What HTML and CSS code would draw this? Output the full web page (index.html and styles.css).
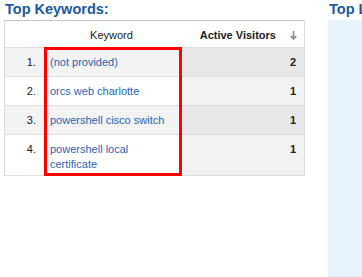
FILE: index.html
```html
<!DOCTYPE html>
<html lang="en">
<head>
  <meta charset="UTF-8" />
  <title>Real-Time Overview</title>
  <link rel="stylesheet" href="styles.css">
</head>
<body>
  <div class="dashboard">
    <!-- keywords widget -->
    <section class="widget keywords">
      <h2 class="widget-title">Top Keywords:</h2>
      <div class="table-wrap">
        <table class="report">
          <colgroup>
            <col class="col-num">
            <col class="col-key">
            <col class="col-val">
          </colgroup>
          <thead>
            <tr>
              <th></th>
              <th class="center">Keyword</th>
              <th class="val">Active Visitors
                <svg class="sort-arrow" width="7" height="9" viewBox="0 0 7 9">
                  <path d="M3.5 0 V8 M0.7 5 L3.5 8 L6.3 5" fill="none" stroke="#8a8a8a" stroke-width="1.6"/>
                </svg>
              </th>
            </tr>
          </thead>
          <tbody>
            <tr class="odd">
              <td class="num">1.</td>
              <td class="key"><a href="#">(not provided)</a></td>
              <td class="val">2</td>
            </tr>
            <tr>
              <td class="num">2.</td>
              <td class="key"><a href="#">orcs web charlotte</a></td>
              <td class="val">1</td>
            </tr>
            <tr class="odd">
              <td class="num">3.</td>
              <td class="key"><a href="#">powershell cisco switch</a></td>
              <td class="val">1</td>
            </tr>
            <tr>
              <td class="num">4.</td>
              <td class="key"><a href="#">powershell local certificate</a></td>
              <td class="val">1</td>
            </tr>
          </tbody>
        </table>
        <div class="highlight"></div>
      </div>
    </section>

    <!-- next widget, cut off at the window edge -->
    <section class="widget pages">
      <h2 class="widget-title">Top Locations:</h2>
      <div class="panel"></div>
    </section>
  </div>
</body>
</html>
```

FILE: styles.css
```css
body {
  margin: 0;
  font-family: "Liberation Sans", Arial, sans-serif;
  font-size: 11px;
  color: #222;
  background: #fff;
  overflow: hidden;
}

.dashboard {
  display: flex;
  padding-left: 4px;
  height: 277px;
}

.widget-title {
  margin: 0;
  height: 20px;
  padding-left: 1px;
  font-size: 14.5px;
  line-height: 18px;
  font-weight: bold;
  color: #1a58a0;
  white-space: nowrap;
}

.keywords {
  width: 301px;
  flex: none;
}

.table-wrap {
  position: relative;
}

.report {
  width: 301px;
  border-collapse: collapse;
  table-layout: fixed;
  border-left: 1px solid #ddd;
  border-right: 1px solid #ddd;
  border-top: 1px solid #c4c4c4;
}

.report col.col-num { width: 40px; }
.report col.col-key { width: 138px; }
.report col.col-val { width: 122px; }

.report th {
  height: 24px;
  padding: 2px 8px 0;
  font-weight: normal;
  text-align: right;
  border-bottom: 1px solid #ddd;
  background: #fff;
  white-space: nowrap;
}

.report th.center {
  text-align: center;
  padding: 2px 6px 0 2px;
}

.report th.val {
  font-weight: bold;
  padding-right: 7px;
}

.sort-arrow {
  margin-left: 11px;
  vertical-align: -1px;
}

.report td {
  height: 18px;
  padding: 7px 8px 3px;
  line-height: 15px;
  vertical-align: top;
  border-bottom: 1px solid #ddd;
  background: #fff;
}

.report td.num {
  text-align: right;
  border-right: 1px solid #e4e4e4;
}

.report td.key {
  padding-left: 5px;
  padding-right: 6px;
}

.report td.val {
  text-align: right;
  font-weight: bold;
  background: #f2f2f2;
}

.report tr.odd td {
  background: #f3f3f3;
}

.report tr.odd td.val {
  background: #e7e7e7;
}

.report a {
  color: #2566b4;
  text-decoration: none;
}

/* red marker around the keyword column */
.highlight {
  position: absolute;
  left: 40px;
  top: 27px;
  width: 132px;
  height: 123px;
  border: 3px solid #f00;
}

.pages {
  margin-left: 23px;
  flex: 1;
  min-width: 0;
  overflow: hidden;
}

.panel {
  height: 257px;
  background: #e8f3fd;
}
```
